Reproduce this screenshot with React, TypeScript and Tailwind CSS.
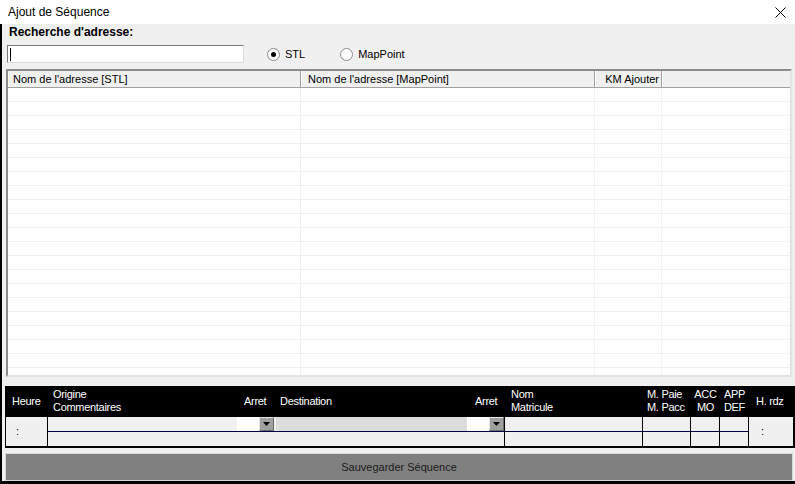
const ROWS = Array.from({ length: 22 }, (_, i) => i);

function DropButton() {
  return (
    <div className="w-[15px] h-full bg-[#a0a0a0] border border-t-[#e3e3e3] border-l-[#e3e3e3] border-b-[#696969] border-r-[#696969] flex items-center justify-center">
      <svg width="7" height="4" viewBox="0 0 7 4">
        <path d="M0 0 H7 L3.5 4 Z" fill="#000" />
      </svg>
    </div>
  );
}

function TwoRowCell({ w }: { w: string }) {
  return (
    <div className={`${w} ml-px flex flex-col`}>
      <div className="h-[14px] bg-[#f0f0f0]" />
      <div className="h-px bg-[#000048]" />
      <div className="h-[14px] bg-[#f0f0f0]" />
    </div>
  );
}

export default function App() {
  return (
    <div className="w-[795px] h-[484px] overflow-hidden bg-[#f0f0f0] flex flex-col font-['Liberation_Sans',Arial,sans-serif] text-black">
      {/* title bar */}
      <div className="h-6 shrink-0 bg-white flex items-center justify-between pl-2 pr-[9px]">
        <span className="text-[12px] leading-none">Ajout de Séquence</span>
        <svg width="11" height="11" viewBox="0 0 11 11" className="mt-px">
          <path d="M0.5 0.5 L10.5 10.5 M10.5 0.5 L0.5 10.5" stroke="#000" strokeWidth="1" />
        </svg>
      </div>

      <div className="flex-1 flex flex-col border-l-2 border-black">
        {/* search */}
        <div className="h-[21px] pt-px pl-[7px] text-[12px] font-bold leading-[14px]">Recherche d'adresse:</div>
        <div className="h-[18px] flex items-center text-[11px]">
          <div className="ml-[5px] w-[237px] h-[18px] bg-white border border-t-[#7a7a7a] border-l-[#7a7a7a] border-b-[#dcdcdc] border-r-[#dcdcdc] flex items-center pl-[2px]">
            <div className="w-px h-[13px] bg-black" />
          </div>
          <div className="ml-[23px] w-[13px] h-[13px] rounded-full bg-white border border-[#8a8a8a] flex items-center justify-center">
            <div className="w-[5px] h-[5px] rounded-full bg-black" />
          </div>
          <span className="ml-[5px]">STL</span>
          <div className="ml-[35px] w-[13px] h-[13px] rounded-full bg-white border border-[#8a8a8a]" />
          <span className="ml-[5px]">MapPoint</span>
        </div>

        {/* address table */}
        <div className="mt-[6px] ml-[4px] w-[786px] h-[308px] border-2 border-t-[#8c8c8c] border-l-[#8c8c8c] border-b-[#e3e3e3] border-r-[#e3e3e3] bg-white overflow-hidden flex flex-col text-[11px]">
          <div className="h-[17px] shrink-0 flex bg-[#f0f0f0] border-b border-[#a0a0a0]">
            <div className="w-[293px] border-l border-l-white border-r border-r-[#a0a0a0] pl-[4px] leading-[16px]">Nom de l'adresse [STL]</div>
            <div className="w-[294px] border-l border-l-white border-r border-r-[#a0a0a0] pl-[6px] leading-[16px]">Nom de l'adresse [MapPoint]</div>
            <div className="w-[67px] border-l border-l-white border-r border-r-[#a0a0a0] pr-[2px] text-right leading-[16px]">KM Ajouter</div>
            <div className="flex-1 border-l border-l-white" />
          </div>
          {ROWS.map((r) => (
            <div key={r} className="h-[14px] shrink-0 flex border-b border-[#f0f0f0]">
              <div className="w-[293px] border-r border-[#f0f0f0]" />
              <div className="w-[294px] border-r border-[#f0f0f0]" />
              <div className="w-[67px] border-r border-[#f0f0f0]" />
              <div className="flex-1" />
            </div>
          ))}
        </div>

        {/* sequence panel */}
        <div className="mt-[9px] ml-[3px] w-[790px] h-[62px] bg-black flex flex-col">
          <div className="h-[31px] flex items-center text-white text-[11px] leading-[13px] tracking-[-0.3px]">
            <div className="w-[43px] pl-[7px]">Heure</div>
            <div className="w-[189px] pl-[5px] -mt-px">
              <div>Origine</div>
              <div>Commentaires</div>
            </div>
            <div className="w-[39px] pl-[7px]">Arret</div>
            <div className="w-[191px] pl-[4px]">Destination</div>
            <div className="w-[38px] pl-[8px]">Arret</div>
            <div className="w-[138px] pl-[6px] -mt-px">
              <div>Nom</div>
              <div>Matricule</div>
            </div>
            <div className="w-[48px] pl-[4px] -mt-px">
              <div>M. Paie</div>
              <div>M. Pacc</div>
            </div>
            <div className="w-[29px] text-center -mt-px">
              <div>ACC</div>
              <div>MO</div>
            </div>
            <div className="w-[29px] text-center -mt-px">
              <div>APP</div>
              <div>DEF</div>
            </div>
            <div className="w-[46px] pl-[7px]">H. rdz</div>
          </div>

          <div className="h-[29px] flex text-[11px]">
            <div className="ml-px w-[41px] bg-[#f0f0f0] flex items-center pl-[10px]">:</div>
            <div className="ml-px w-[456px] flex flex-col">
              <div className="h-[14px] flex bg-[#f0f0f0]">
                <div className="w-[189px]" />
                <div className="w-[22px] bg-white" />
                <DropButton />
                <div className="w-[2px]" />
                <div className="w-[191px] bg-[#dcdcdc]" />
                <div className="w-[22px] bg-white" />
                <DropButton />
              </div>
              <div className="h-px bg-[#000048]" />
              <div className="h-[14px] bg-[#f0f0f0]" />
            </div>
            <TwoRowCell w="w-[137px]" />
            <TwoRowCell w="w-[47px]" />
            <TwoRowCell w="w-[28px]" />
            <TwoRowCell w="w-[28px]" />
            <div className="ml-px w-[44px] bg-[#f0f0f0] flex items-center pl-[12px]">:</div>
          </div>
        </div>

        {/* save button */}
        <div className="mt-[5px] ml-[3px] w-[788px] h-[28px] bg-[#808080] border border-[#d8d8d8] flex items-center justify-center text-[11px] text-[#1a1a1a]">
          Sauvegarder Séquence
        </div>
        <div className="h-[3px] bg-black" />
      </div>
    </div>
  );
}
